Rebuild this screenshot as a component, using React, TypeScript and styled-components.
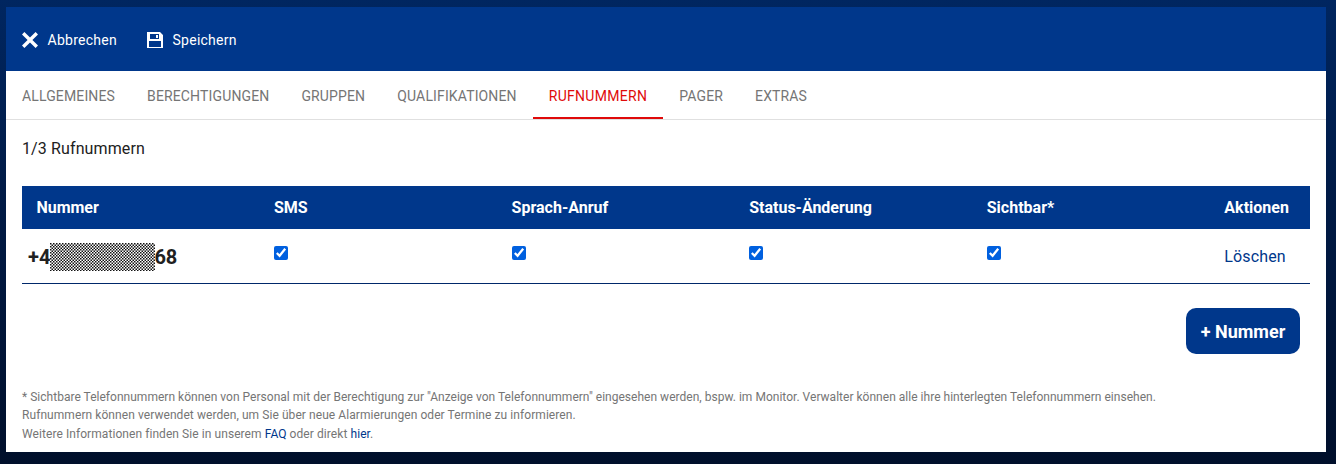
import React from "react";
import styled, { createGlobalStyle } from "styled-components";

const Global = createGlobalStyle`
  html, body { margin: 0; padding: 0; height: 100%; }
  body {
    font-family: Roboto, "Liberation Sans", sans-serif;
    background: linear-gradient(180deg, #002660 0%, #001b47 40%, #000f2b 100%);
    overflow: hidden;
  }
`;

const Page = styled.div`
  width: 1336px;
  height: 464px;
  box-sizing: border-box;
  padding: 7px 10px 12px 6px;
`;

const Panel = styled.div`
  height: 445px;
  background: #fff;
  display: flex;
  flex-direction: column;
`;

const Toolbar = styled.div`
  height: 64px;
  flex: none;
  background: #00378b;
  display: flex;
  align-items: center;
  padding: 1px 16px 0;
  box-sizing: border-box;
  gap: 30px;
`;

const ToolButton = styled.div`
  display: flex;
  align-items: center;
  gap: 9.6px;
  color: #fff;
  font-size: 14px;
  letter-spacing: 0.25px;
  svg { display: block; }
`;

const Tabs = styled.div`
  height: 48px;
  flex: none;
  display: flex;
  border-bottom: 1px solid #e0e0e0;
`;

const Tab = styled.div<{ $active?: boolean }>`
  height: 48px;
  box-sizing: border-box;
  padding: 3px 16px 0;
  display: flex;
  align-items: center;
  font-size: 14px;
  letter-spacing: ${(p) => (p.$active ? "0.3px" : "0.14px")};
  text-transform: uppercase;
  color: ${(p) => (p.$active ? "#e00a0a" : "#757575")};
  border-bottom: 2px solid ${(p) => (p.$active ? "#e00a0a" : "transparent")};
`;

const Content = styled.div`
  padding: 19px 16px 0;
  display: flex;
  flex-direction: column;
  flex: 1;
`;

const Count = styled.div`
  font-size: 16px;
  line-height: 19px;
  letter-spacing: 0.12px;
  color: #212121;
  margin-bottom: 28px;
`;

const TableGrid = styled.div`
  display: grid;
  grid-template-columns: repeat(5, 237.6px) 100px;
`;

const HeadCell = styled.div`
  height: 43px;
  background: #00378b;
  color: #fff;
  font-size: 16px;
  font-weight: 700;
  padding-left: 14.4px;
  display: flex;
  align-items: center;
`;

const Cell = styled.div`
  border-bottom: 1px solid #00286a;
  padding: 17px 0 0 14.4px;
  height: 37px;
`;

const NumberCell = styled.div`
  height: 52px;
  box-sizing: content-box;
  border-bottom: 1px solid #00286a;
  padding: 2px 0 0 6px;
  display: flex;
  align-items: center;
  font-size: 20px;
  font-weight: 700;
  color: #212121;
`;

const Redacted = styled.svg`
  display: block;
  flex: none;
  margin: 0 -0.4px 0 -0.6px;
  width: 105px;
  height: 28px;
`;

const Check = styled.input.attrs({ type: "checkbox", defaultChecked: true })`
  display: block;
  width: 14px;
  height: 14px;
  margin: 0;
  accent-color: #0060df;
`;

const DeleteLink = styled.a`
  font-size: 16px;
  line-height: 19px;
  letter-spacing: 0.12px;
  color: #00378b;
  display: block;
  margin-top: 1px;
`;

const ButtonRow = styled.div`
  display: flex;
  justify-content: flex-end;
  padding: 24px 10px 0 0;
`;

const AddButton = styled.button`
  width: 114px;
  height: 46px;
  border: none;
  border-radius: 10px;
  background: #00378b;
  color: #fff;
  font-family: inherit;
  font-size: 18px;
  font-weight: 700;
`;

const Notes = styled.div`
  margin-top: 34px;
  font-size: 12px;
  line-height: 18.4px;
  color: #757575;
`;

const NoteLine = styled.div<{ $spacing: number }>`
  letter-spacing: ${(p) => p.$spacing}px;
  white-space: nowrap;
`;

const NoteLink = styled.a`
  color: #00378b;
`;

const CloseIcon = () => (
  <svg width="16" height="16" viewBox="0 0 16 16" fill="#fff" aria-hidden="true">
    <path d="M2.4 0 8 5.6 13.6 0 16 2.4 10.4 8 16 13.6 13.6 16 8 10.4 2.4 16 0 13.6 5.6 8 0 2.4z" />
  </svg>
);

const SaveIcon = () => (
  <svg width="16" height="16" viewBox="0 0 16 16" aria-hidden="true">
    <path
      fillRule="evenodd"
      fill="#fff"
      d="M0 0H13L16 3V16H0zM3 2V7H12V2zM9 3H11V6H9zM2 9V15H14V9z"
    />
  </svg>
);

const RedactedBlock = () => (
  <Redacted viewBox="0 0 105 28" aria-hidden="true">
    <defs>
      <pattern id="redact" width="3" height="3" patternUnits="userSpaceOnUse">
        <rect width="3" height="3" fill="#fff" />
        <rect width="1.5" height="1.5" fill="#111" />
        <rect x="1.5" y="1.5" width="1.5" height="1.5" fill="#111" />
      </pattern>
    </defs>
    <rect width="105" height="28" fill="url(#redact)" />
  </Redacted>
);

const columns = ["Nummer", "SMS", "Sprach-Anruf", "Status-Änderung", "Sichtbar*", "Aktionen"];
const tabs = ["Allgemeines", "Berechtigungen", "Gruppen", "Qualifikationen", "Rufnummern", "Pager", "Extras"];

export default function App() {
  return (
    <Page>
      <Global />
      <Panel>
        <Toolbar>
          <ToolButton><CloseIcon />Abbrechen</ToolButton>
          <ToolButton><SaveIcon />Speichern</ToolButton>
        </Toolbar>
        <Tabs>
          {tabs.map((t) => (
            <Tab key={t} $active={t === "Rufnummern"}>{t}</Tab>
          ))}
        </Tabs>
        <Content>
          <Count>1/3 Rufnummern</Count>
          <TableGrid>
            {columns.map((c) => (
              <HeadCell key={c}>{c}</HeadCell>
            ))}
            <NumberCell>+4<RedactedBlock />68</NumberCell>
            <Cell><Check /></Cell>
            <Cell><Check /></Cell>
            <Cell><Check /></Cell>
            <Cell><Check /></Cell>
            <Cell><DeleteLink>Löschen</DeleteLink></Cell>
          </TableGrid>
          <ButtonRow>
            <AddButton>+ Nummer</AddButton>
          </ButtonRow>
          <Notes>
            <NoteLine $spacing={0.02}>
              * Sichtbare Telefonnummern können von Personal mit der Berechtigung zur "Anzeige von Telefonnummern" eingesehen werden, bspw. im Monitor. Verwalter können alle ihre hinterlegten Telefonnummern einsehen.
            </NoteLine>
            <NoteLine $spacing={0.07}>
              Rufnummern können verwendet werden, um Sie über neue Alarmierungen oder Termine zu informieren.
            </NoteLine>
            <NoteLine $spacing={0.07}>
              Weitere Informationen finden Sie in unserem <NoteLink>FAQ</NoteLink> oder direkt <NoteLink>hier</NoteLink>.
            </NoteLine>
          </Notes>
        </Content>
      </Panel>
    </Page>
  );
}
